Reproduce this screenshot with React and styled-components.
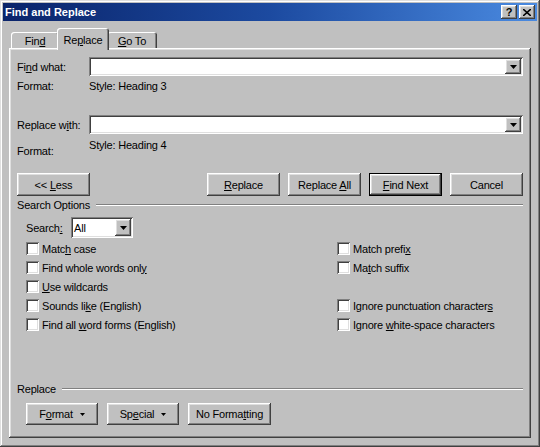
import React from 'react';
import styled, { createGlobalStyle, css } from 'styled-components';

const Global = createGlobalStyle`
  html, body {
    margin: 0;
    padding: 0;
    background: #c0c0c0;
  }
  body {
    font-family: "Liberation Sans", Arial, sans-serif;
    font-size: 11px;
    letter-spacing: -0.2px;
    color: #000;
  }
`;

const raised = css`
  box-shadow: inset -1px -1px #404040, inset 1px 1px #fff,
    inset -2px -2px #808080, inset 2px 2px #dfdfdf;
`;

const sunken = css`
  box-shadow: inset 1px 1px #808080, inset -1px -1px #fff,
    inset 2px 2px #404040, inset -2px -2px #dfdfdf;
`;

const Window = styled.div`
  width: 540px;
  height: 447px;
  box-sizing: border-box;
  padding: 3px;
  background: #c0c0c0;
  display: flex;
  flex-direction: column;
  box-shadow: inset -1px -1px #404040, inset 1px 1px #dfdfdf,
    inset -2px -2px #808080, inset 2px 2px #fff;
`;

const TitleBar = styled.div`
  height: 18px;
  display: flex;
  align-items: center;
  padding: 0 2px 0 2px;
  background: linear-gradient(90deg, #0a246a 0%, #1c4aa0 50%, #4a8ae0 100%);
  color: #fff;
  font-weight: bold;
  font-size: 11px;
  letter-spacing: 0;
`;

const Title = styled.span`
  flex: 1;
`;

const CaptionButton = styled.div`
  width: 16px;
  height: 14px;
  margin-left: ${p => (p.$gap ? '2px' : '0')};
  background: #c0c0c0;
  color: #000;
  display: flex;
  align-items: center;
  justify-content: center;
  font-size: 11px;
  font-weight: bold;
  ${raised}
`;

const Body = styled.div`
  flex: 1;
  display: flex;
  flex-direction: column;
  padding: 7px 6px 6px 6px;
`;

const TabRow = styled.div`
  height: 22px;
  display: flex;
  align-items: flex-end;
  padding-left: 2px;
  margin-bottom: -2px;
  position: relative;
  z-index: 2;
`;

const Tab = styled.div`
  box-sizing: border-box;
  width: ${p => p.$w}px;
  text-align: center;
  line-height: 13px;
  background: #c0c0c0;
  border-radius: 3px 3px 0 0;
  box-shadow: inset 1px 1px #fff, inset -1px 0 #404040, inset -2px 0 #808080;
  ${p =>
    p.$active
      ? css`
          height: 22px;
          padding-top: 6px;
          margin: 0 -2px;
          position: relative;
          z-index: 3;
        `
      : css`
          height: 16px;
          padding-top: 3px;
          margin-bottom: 2px;
        `}
`;

const Panel = styled.div`
  flex: 1;
  display: flex;
  flex-direction: column;
  padding: 9px 8px 13px 8px;
  box-sizing: border-box;
  ${raised}
`;

const U = styled.span`
  text-decoration: underline;
  text-underline-offset: 1px;
`;

const FieldRow = styled.div`
  display: flex;
  align-items: center;
  height: 19px;
  margin-top: ${p => p.$mt || 0}px;
`;

const Label = styled.div`
  width: ${p => p.$w || 72}px;
  flex-shrink: 0;
`;

const Combo = styled.div`
  flex: ${p => (p.$w ? 'none' : 1)};
  width: ${p => (p.$w ? `${p.$w}px` : 'auto')};
  height: ${p => p.$h || 19}px;
  box-sizing: border-box;
  background: #fff;
  padding: 2px;
  display: flex;
  align-items: stretch;
  ${sunken}
`;

const ComboText = styled.div`
  flex: 1;
  padding-left: 1px;
  display: flex;
  align-items: center;
`;

const DropButton = styled.div`
  width: 16px;
  background: #c0c0c0;
  display: flex;
  align-items: center;
  justify-content: center;
  ${raised}
`;

const FormatRow = styled.div`
  display: flex;
  height: ${p => p.$h || 14}px;
  margin-top: ${p => p.$mt || 0}px;
  line-height: 14px;
`;

const FormatLabel = styled.div`
  width: 72px;
  align-self: ${p => (p.$low ? 'flex-end' : 'flex-start')};
`;

const ButtonRow = styled.div`
  display: flex;
  justify-content: space-between;
  margin-top: 15px;
`;

const ButtonGroup = styled.div`
  display: flex;
  gap: 8px;
`;

const Button = styled.div`
  width: ${p => p.$w || 73}px;
  height: ${p => p.$h || 23}px;
  box-sizing: border-box;
  background: #c0c0c0;
  display: flex;
  align-items: center;
  justify-content: center;
  gap: 7px;
  ${raised}
  ${p =>
    p.$default &&
    css`
      box-shadow: inset 0 0 0 1px #000, inset -2px -2px #404040,
        inset 2px 2px #fff, inset -3px -3px #808080, inset 3px 3px #dfdfdf;
    `}
`;

const Legend = styled.div`
  display: flex;
  align-items: center;
  height: 14px;
  margin-top: ${p => (p.$auto ? 'auto' : `${p.$mt || 0}px`)};
`;

const Rule = styled.div`
  flex: 1;
  margin-left: 6px;
  border-top: 1px solid #808080;
  border-bottom: 1px solid #fff;
`;

const SearchRow = styled.div`
  display: flex;
  align-items: center;
  padding-left: 9px;
  margin-top: 5px;
  height: 21px;
`;

const CheckGrid = styled.div`
  display: grid;
  grid-template-columns: 311px 1fr;
  grid-auto-rows: 19px;
  padding-left: 9px;
  margin-top: 1px;
`;

const CheckItem = styled.div`
  display: flex;
  align-items: center;
  gap: 3px;
`;

const Box = styled.div`
  width: 13px;
  height: 13px;
  background: #fff;
  box-sizing: border-box;
  ${sunken}
`;

const BottomButtons = styled.div`
  display: flex;
  gap: 9px;
  padding-left: 9px;
  margin-top: 7px;
`;

const Arrow = ({ w = 7, h = 4 }) => (
  <svg width={w} height={h} viewBox={`0 0 ${w} ${h}`}>
    <path d={`M0 0 H${w} L${w / 2} ${h} Z`} fill="#000" />
  </svg>
);

const CloseGlyph = () => (
  <svg width="8" height="7" viewBox="0 0 8 7">
    <path d="M0 0 L8 7 M8 0 L0 7" stroke="#000" strokeWidth="1.6" />
  </svg>
);

const Check = ({ children }) => (
  <CheckItem>
    <Box />
    <span>{children}</span>
  </CheckItem>
);

export default function App() {
  return (
    <>
      <Global />
      <Window>
        <TitleBar>
          <Title>Find and Replace</Title>
          <CaptionButton>?</CaptionButton>
          <CaptionButton $gap>
            <CloseGlyph />
          </CaptionButton>
        </TitleBar>
        <Body>
          <TabRow>
            <Tab $w={48}>
              Fin<U>d</U>
            </Tab>
            <Tab $w={52} $active>
              Re<U>p</U>lace
            </Tab>
            <Tab $w={50}>
              <U>G</U>o To
            </Tab>
          </TabRow>
          <Panel>
            <FieldRow>
              <Label>
                Fi<U>n</U>d what:
              </Label>
              <Combo>
                <ComboText />
                <DropButton>
                  <Arrow />
                </DropButton>
              </Combo>
            </FieldRow>
            <FormatRow $mt={3}>
              <FormatLabel>Format:</FormatLabel>
              <span>Style: Heading 3</span>
            </FormatRow>
            <FieldRow $mt={22}>
              <Label>
                Replace w<U>i</U>th:
              </Label>
              <Combo>
                <ComboText />
                <DropButton>
                  <Arrow />
                </DropButton>
              </Combo>
            </FieldRow>
            <FormatRow $mt={4} $h={20}>
              <FormatLabel $low>Format:</FormatLabel>
              <span>Style: Heading 4</span>
            </FormatRow>
            <ButtonRow>
              <Button>
                <span>
                  &lt;&lt; <U>L</U>ess
                </span>
              </Button>
              <ButtonGroup>
                <Button>
                  <span>
                    <U>R</U>eplace
                  </span>
                </Button>
                <Button>
                  <span>
                    Replace <U>A</U>ll
                  </span>
                </Button>
                <Button $default>
                  <span>
                    <U>F</U>ind Next
                  </span>
                </Button>
                <Button>Cancel</Button>
              </ButtonGroup>
            </ButtonRow>
            <Legend $mt={2}>
              <span>Search Options</span>
              <Rule />
            </Legend>
            <SearchRow>
              <Label $w={45}>
                Search<U>:</U>
              </Label>
              <Combo $w={62} $h={21}>
                <ComboText>All</ComboText>
                <DropButton>
                  <Arrow />
                </DropButton>
              </Combo>
            </SearchRow>
            <CheckGrid>
              <Check>
                Matc<U>h</U> case
              </Check>
              <Check>
                Match prefi<U>x</U>
              </Check>
              <Check>
                Find whole words onl<U>y</U>
              </Check>
              <Check>
                Ma<U>t</U>ch suffix
              </Check>
              <Check>
                <U>U</U>se wildcards
              </Check>
              <div />
              <Check>
                Sounds li<U>k</U>e (English)
              </Check>
              <Check>
                Ignore punctuation character<U>s</U>
              </Check>
              <Check>
                Find all <U>w</U>ord forms (English)
              </Check>
              <Check>
                Ignore <U>w</U>hite-space characters
              </Check>
            </CheckGrid>
            <Legend $auto>
              <span>Replace</span>
              <Rule />
            </Legend>
            <BottomButtons>
              <Button $w={72} $h={22}>
                <span>
                  F<U>o</U>rmat
                </span>
                <Arrow w={5} h={3} />
              </Button>
              <Button $w={72} $h={22}>
                <span>
                  Sp<U>e</U>cial
                </span>
                <Arrow w={5} h={3} />
              </Button>
              <Button $w={83} $h={22}>
                <span>
                  No Forma<U>t</U>ting
                </span>
              </Button>
            </BottomButtons>
          </Panel>
        </Body>
      </Window>
    </>
  );
}
